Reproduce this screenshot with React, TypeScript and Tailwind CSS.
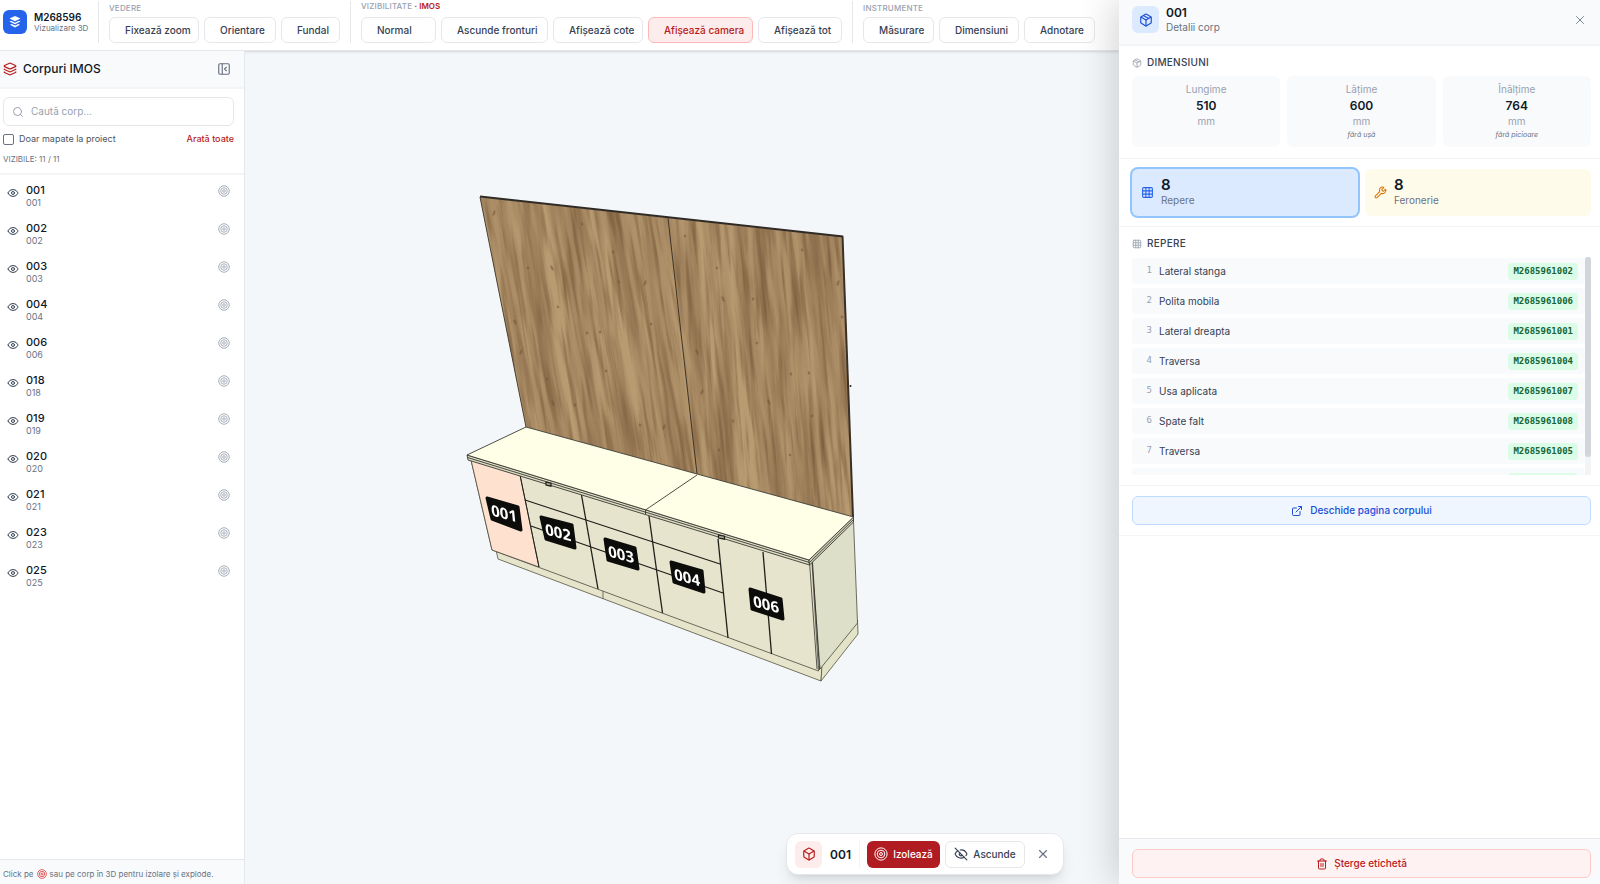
import { useState } from "react";
import {
  Box,
  ExternalLink,
  Eye,
  EyeOff,
  Grid3x3,
  Layers,
  Package,
  PanelLeftClose,
  Search,
  Trash2,
  Wrench,
  X,
} from "lucide-react";

const bodies = [
  "001",
  "002",
  "003",
  "004",
  "006",
  "018",
  "019",
  "020",
  "021",
  "023",
  "025",
];

const parts = [
  { name: "Lateral stanga", code: "M2685961002" },
  { name: "Polita mobila", code: "M2685961006" },
  { name: "Lateral dreapta", code: "M2685961001" },
  { name: "Traversa", code: "M2685961004" },
  { name: "Usa aplicata", code: "M2685961007" },
  { name: "Spate falt", code: "M2685961008" },
  { name: "Traversa", code: "M2685961005" },
  { name: "Traversa", code: "M2685961003" },
];

const dimensions = [
  { label: "Lungime", value: "510", note: "" },
  { label: "Lățime", value: "600", note: "fără ușă" },
  { label: "Înălțime", value: "764", note: "fără picioare" },
];

const viewTools = [
  { label: "Fixează zoom", width: "w-[90px]" },
  { label: "Orientare", width: "w-[72px]" },
  { label: "Fundal", width: "w-[59px]" },
];

const visibilityTools = [
  { label: "Ascunde fronturi", width: "w-[107px]" },
  { label: "Afișează cote", width: "w-[90px]" },
  { label: "Afișează camera", width: "w-[105px]", active: true },
  { label: "Afișează tot", width: "w-[84px]" },
];

const instrumentTools = [
  { label: "Măsurare", width: "w-[71px]" },
  { label: "Dimensiuni", width: "w-[80px]" },
  { label: "Adnotare", width: "w-[71px]" },
];

// front labels, placed on the plane of the doors
const tags = [
  { id: "001", points: "487,498 518,507 521,530 492,519", x: 504, y: 513 },
  { id: "002", points: "541,517 572,525 575,548 546,539", x: 558, y: 532 },
  { id: "003", points: "605,539 635,548 638,569 608,560", x: 621, y: 554 },
  { id: "004", points: "671,562 702,571 704,592 674,582", x: 687, y: 577 },
  { id: "006", points: "750,589 781,599 783,619 752,609", x: 766, y: 604 },
];

const knots = [
  [494, 213], [582, 224], [528, 268], [552, 268], [613, 252], [619, 282],
  [645, 283], [558, 307], [587, 333], [515, 322], [600, 332], [651, 324],
  [521, 352], [606, 371], [547, 379], [553, 403], [575, 405], [640, 425],
  [664, 427], [685, 236], [717, 268], [723, 299], [753, 299], [802, 250],
  [838, 283], [842, 317], [757, 343], [697, 352], [791, 374], [809, 373],
  [702, 392], [733, 421], [812, 416], [769, 402], [719, 450], [790, 455],
];

type Tool = { label: string; width: string; active?: boolean };

function TargetIcon({ className }: { className: string }) {
  return (
    <svg
      viewBox="0 0 24 24"
      fill="none"
      stroke="currentColor"
      strokeWidth="1.700"
      className={className}
      aria-hidden="true"
    >
      <circle cx="12" cy="12" r="10.500" />
      <circle cx="12" cy="12" r="6.500" />
      <circle cx="12" cy="12" r="2.500" />
    </svg>
  );
}

function ToolButton({ label, width, active }: Tool) {
  return (
    <button
      type="button"
      className={`h-[26px] shrink-0 rounded-md border pl-[15px] text-left text-[10px] font-medium whitespace-nowrap ${width} ${
        active
          ? "border-[#fcb9b9] bg-[#fdecec] text-[#b91c1c]"
          : "border-gray-200 bg-white text-gray-700"
      }`}
    >
      {label}
    </button>
  );
}

function GroupLabel({ children }: { children: React.ReactNode }) {
  return (
    <div className="text-[8px] leading-[10px] font-medium tracking-wide text-gray-400 uppercase">
      {children}
    </div>
  );
}

function Toolbar() {
  return (
    <header className="flex h-[51px] shrink-0 items-center overflow-hidden border-b border-gray-200 bg-white pb-[6px] pl-[3px] shadow-sm">
      <div className="flex w-[95px] shrink-0 items-center gap-[7px]">
        <div className="flex size-6 shrink-0 items-center justify-center rounded-md bg-[#2563eb]">
          <svg viewBox="0 0 16 16" className="size-4 fill-white">
            <path d="M8 2l5.500 2.600L8 7.200 2.500 4.600z" />
            <path d="M4 6.800l4 1.900 4-1.900 1.500.8L8 10.200 2.500 7.600z" />
            <path d="M4.500 10l3.500 1.600L11.500 10l1.500.8L8 13.400 3 10.800z" />
          </svg>
        </div>
        <div className="whitespace-nowrap">
          <div className="text-[10px] leading-[12px] font-semibold text-gray-900">
            M268596
          </div>
          <div className="text-[8px] leading-[11px] text-gray-500">
            Vizualizare 3D
          </div>
        </div>
      </div>

      <div className="flex h-[42px] shrink-0 flex-col justify-end gap-1 border-l border-gray-200 pr-[10px] pl-[10px]">
        <GroupLabel>Vedere</GroupLabel>
        <div className="flex gap-[5px]">
          {viewTools.map((tool) => (
            <ToolButton key={tool.label} {...tool} />
          ))}
        </div>
      </div>

      <div className="flex h-[42px] shrink-0 flex-col justify-end gap-[6px] border-l border-gray-200 pr-[10px] pl-[10px]">
        <GroupLabel>
          Vizibilitate{" "}
          <span className="font-semibold tracking-normal text-[#b91c1c]">
            ·&nbsp;IMOS
          </span>
        </GroupLabel>
        <div className="flex gap-[5px]">
          <select
            aria-label="Mod de afișare"
            className="h-[26px] w-[75px] shrink-0 appearance-none rounded-md border border-gray-200 bg-white pl-[15px] text-[10px] font-medium text-gray-700"
          >
            <option>Normal</option>
          </select>
          {visibilityTools.map((tool) => (
            <ToolButton key={tool.label} {...tool} />
          ))}
        </div>
      </div>

      <div className="flex h-[42px] shrink-0 flex-col justify-end gap-1 border-l border-gray-200 pl-[10px]">
        <GroupLabel>Instrumente</GroupLabel>
        <div className="flex gap-[5px]">
          {instrumentTools.map((tool) => (
            <ToolButton key={tool.label} {...tool} />
          ))}
        </div>
      </div>
    </header>
  );
}

function Sidebar() {
  const [query, setQuery] = useState("");
  const visible = bodies.filter((id) => id.includes(query));

  return (
    <aside className="flex w-[245px] shrink-0 flex-col border-r border-gray-200 bg-white">
      <div className="flex h-[38px] items-center border-b-2 border-gray-100 bg-slate-50 pr-[13px] pl-[3px]">
        <Layers className="size-[14px] text-[#b91c1c]" />
        <h2 className="ml-[6px] text-[12px] font-medium text-gray-900">
          Corpuri IMOS
        </h2>
        <button
          type="button"
          aria-label="Închide panoul"
          className="ml-auto text-gray-500"
        >
          <PanelLeftClose className="size-[14px]" />
        </button>
      </div>

      <div className="border-b-2 border-gray-100 pt-2 pr-[10px] pb-2 pl-[3px]">
        <div className="flex h-[29px] items-center gap-[7px] rounded-md border border-gray-200 px-2">
          <Search className="size-3 text-gray-400" />
          <input
            type="text"
            aria-label="Caută corp"
            placeholder="Caută corp..."
            value={query}
            onChange={(e) => setQuery(e.target.value)}
            className="min-w-0 flex-1 text-[10px] outline-none placeholder:text-gray-400"
          />
        </div>
        <div className="mt-[7px] flex items-center justify-between text-[9px] leading-[12px]">
          <label className="flex items-center gap-[5px] text-gray-600">
            <input
              type="checkbox"
              className="size-[11px] appearance-none rounded-[2px] border border-gray-500 bg-white checked:bg-[#b91c1c]"
            />
            Doar mapate la proiect
          </label>
          <button type="button" className="font-medium text-[#b91c1c]">
            Arată toate
          </button>
        </div>
        <div className="mt-2 text-[8px] leading-[12px] text-gray-500">
          VIZIBILE: 11 / 11
        </div>
      </div>

      <ul className="flex-1 pt-1">
        {visible.map((id) => (
          <li key={id} className="flex h-[38px] items-start pr-[14px] pl-[7px]">
            <button
              type="button"
              aria-label={`Ascunde ${id}`}
              className="mt-2 text-gray-700"
            >
              <Eye className="size-3" />
            </button>
            <div className="ml-[7px] pt-[5px]">
              <div className="text-[11px] leading-[13px] font-medium text-gray-900">
                {id}
              </div>
              <div className="text-[9px] leading-[12px] text-gray-500">
                {id}
              </div>
            </div>
            <button
              type="button"
              aria-label={`Izolează ${id}`}
              className="mt-[6px] ml-auto text-gray-400"
            >
              <TargetIcon className="size-3" />
            </button>
          </li>
        ))}
      </ul>

      <p className="flex h-[25px] items-center gap-[3px] border-t border-gray-200 bg-slate-50 pt-[4px] pl-[3px] text-[8px] whitespace-nowrap text-gray-500">
        Click pe
        <TargetIcon className="size-[10px] text-[#dc2626]" />
        sau pe corp în 3D pentru izolare și explode.
      </p>
    </aside>
  );
}

function Scene() {
  return (
    <svg
      viewBox="245 51 874 833"
      className="block h-full w-full"
      role="img"
      aria-label="Model 3D"
    >
      <defs>
        <filter
          id="grain"
          x="0"
          y="0"
          width="100%"
          height="100%"
          colorInterpolationFilters="sRGB"
        >
          <feTurbulence
            type="fractalNoise"
            baseFrequency="0.06 0.005"
            numOctaves="4"
            seed="7"
          />
          <feColorMatrix values="0 0 0 0 0.48  0 0 0 0 0.36  0 0 0 0 0.24  1.5 0 0 0 -0.5" />
        </filter>
        <filter
          id="fibre"
          x="0"
          y="0"
          width="100%"
          height="100%"
          colorInterpolationFilters="sRGB"
        >
          <feTurbulence
            type="fractalNoise"
            baseFrequency="0.22 0.012"
            numOctaves="3"
            seed="21"
          />
          <feColorMatrix values="0 0 0 0 0.42  0 0 0 0 0.3  0 0 0 0 0.18  0 1.5 0 0 -0.68" />
        </filter>
        <clipPath id="leftBoard">
          <path d="M480 197L668 218 697 474 526 427z" />
        </clipPath>
        <clipPath id="rightBoard">
          <path d="M668 218L843 237 853 517 697 474z" />
        </clipPath>
      </defs>

      {/* Wall boards */}
      <path d="M480 197L843 237 853 517 526 427z" fill="#b99b72" />
      <g clipPath="url(#leftBoard)">
        <g transform="skewX(9)">
          <rect x="380" y="180" width="290" height="310" filter="url(#grain)" />
          <rect x="380" y="180" width="290" height="310" filter="url(#fibre)" />
        </g>
      </g>
      <g clipPath="url(#rightBoard)">
        <g transform="skewX(5)">
          <rect x="620" y="200" width="230" height="330" filter="url(#grain)" />
          <rect x="620" y="200" width="230" height="330" filter="url(#fibre)" />
        </g>
      </g>
      <g fill="#6f5032" opacity="0.5">
        {knots.map(([x, y], idx) => (
          <ellipse
            key={idx}
            cx={x}
            cy={y}
            rx={1.2}
            ry={idx % 3 === 0 ? 3 : 1.6}
            transform={`rotate(${idx % 2 ? -25 : 20} ${x} ${y})`}
          />
        ))}
      </g>
      <path d="M480 197L526 427" stroke="#4a4238" strokeWidth="1" />
      <path d="M668 218L697 474" stroke="#3f3528" strokeWidth="1" />
      <path d="M480 196.500L843 236.500" stroke="#2f2a24" strokeWidth="1.800" />
      <path d="M842.500 236L853 517" stroke="#3b3026" strokeWidth="2" />
      <circle cx="850.500" cy="386" r="1" fill="#222" />

      {/* Plinth */}
      <g stroke="#55533f" strokeWidth="0.800" strokeLinejoin="round">
        <path d="M496 550L822 668 821 681 498 559z" fill="#e6e5cc" />
        <path d="M821 681L858 634 857.500 620 822 665z" fill="#e3e3c8" />
        <path d="M603 590V599" />
      </g>

      {/* Fronts and side */}
      <g stroke="#4b4a3e" strokeWidth="0.800" strokeLinejoin="round">
        <path d="M812 562L853.500 521 857.500 623 820 669z" fill="#dedfc8" />
        <path d="M471 460L812 563 818.500 671 492 550z" fill="#e6e4cd" />
        <path d="M471 460L520 475 539 567 492 550z" fill="#fee2cf" />
      </g>
      <g fill="none" stroke="#1f1f1a" strokeWidth="1.300">
        <path d="M520 475L539 567" strokeWidth="1" />
        <path d="M581.500 495L598 589" />
        <path d="M649 516L662.500 613" />
        <path d="M718 539L728 638" />
        <path d="M763 552L771.500 654" />
        <path d="M525 500L586 520 653 542 720 564" />
        <path d="M531 526L591 547 657 570 723 593" />
        <path d="M812.500 562L819.500 670" strokeWidth="0.700" />
        <path d="M809.500 562L817 669" strokeWidth="0.700" />
      </g>

      {/* Countertop */}
      <g stroke="#3a3a33" strokeWidth="0.900" strokeLinejoin="round">
        <path d="M467 455L809 560 809.500 565 468 460z" fill="#dcdcc4" />
        <path d="M809 560L853.500 517 853.500 522 809.500 565z" fill="#d4d4bc" />
        <path d="M467 455L526 427 853.500 517 809 560z" fill="#ffffe8" />
        <path d="M467.500 457.500L809.500 562.500 853.500 519.500" fill="none" />
        <path d="M697 475L645.500 510V514" fill="none" />
      </g>
      <g fill="#a6a695" stroke="#1f1f1a" strokeWidth="1.200">
        <path d="M546 482l5 1.200v3l-5-1.200z" />
        <path d="M718.500 535l6 1.200v3l-6-1.200z" />
      </g>

      {/* Labels */}
      {tags.map((tag) => (
        <g key={tag.id}>
          <polygon
            points={tag.points}
            fill="#0c0c0a"
            stroke="#0c0c0a"
            strokeWidth="3"
            strokeLinejoin="round"
          />
          <text
            transform={`translate(${tag.x} ${tag.y}) skewY(15) skewX(6)`}
            textAnchor="middle"
            dominantBaseline="central"
            className="fill-white font-['Open_Sans',sans-serif] text-[15px] font-bold"
          >
            {tag.id}
          </text>
        </g>
      ))}
    </svg>
  );
}

function SelectionBar() {
  return (
    <div className="absolute right-[55px] bottom-[9px] flex h-[42px] items-center rounded-xl border border-gray-200 bg-white px-2 shadow-lg">
      <div className="flex size-[27px] items-center justify-center rounded-md bg-[#fdecec] text-[#b91c1c]">
        <Box className="size-[14px]" />
      </div>
      <span className="ml-2 border-r border-gray-100 pr-2 text-[12px] leading-[27px] font-semibold text-gray-900">
        001
      </span>
      <button
        type="button"
        className="ml-[7px] flex h-[27px] w-[73px] items-center justify-center gap-[5px] rounded-md bg-[#b01c22] text-[10px] font-medium text-white"
      >
        <TargetIcon className="size-[14px]" />
        Izolează
      </button>
      <button
        type="button"
        className="ml-[5px] flex h-[27px] w-[80px] items-center justify-center gap-[5px] rounded-md border border-gray-200 bg-white text-[10px] font-medium text-gray-700"
      >
        <EyeOff className="size-[14px]" />
        Ascunde
      </button>
      <button
        type="button"
        aria-label="Închide selecția"
        className="ml-[11px] pr-[5px] text-gray-500"
      >
        <X className="size-[14px]" />
      </button>
    </div>
  );
}

function DetailPanel() {
  const [tab, setTab] = useState("repere");

  return (
    <section className="z-10 flex w-[481px] shrink-0 flex-col bg-white shadow-[-8px_0_32px_rgba(0,0,0,0.15)]">
      <div className="flex h-[46px] shrink-0 items-center border-b-2 border-gray-100 bg-slate-50 pr-[13px] pb-[5px] pl-[13px]">
        <div className="flex size-[27px] items-center justify-center rounded-md bg-blue-100 text-[#1d4ed8]">
          <Package className="size-[14px]" />
        </div>
        <div className="ml-[7px]">
          <h2 className="text-[12px] leading-[15px] font-semibold text-gray-900">
            001
          </h2>
          <p className="text-[10px] leading-[14px] text-gray-500">
            Detalii corp
          </p>
        </div>
        <button
          type="button"
          aria-label="Închide"
          className="ml-auto text-gray-500"
        >
          <X className="size-[14px]" strokeWidth={1.5} />
        </button>
      </div>

      {/* Dimensions */}
      <div className="border-b border-gray-100 pt-[9px] pr-[9px] pb-[11px] pl-[13px]">
        <h3 className="flex items-center gap-[5px] text-[10px] leading-[15px] font-medium tracking-wide text-gray-700">
          <Package className="size-[10px] text-gray-400" />
          DIMENSIUNI
        </h3>
        <div className="mt-[6px] grid grid-cols-3 gap-[7px] text-center">
          {dimensions.map((d) => (
            <div
              key={d.label}
              className="h-[71px] rounded-md bg-slate-50 pt-[6px]"
            >
              <div className="text-[10px] leading-[15px] text-gray-400">
                {d.label}
              </div>
              <div className="text-[12px] leading-[17px] font-semibold text-gray-900">
                {d.value}
              </div>
              <div className="text-[10px] leading-[14px] text-gray-400">mm</div>
              <div className="text-[7px] leading-[14px] text-gray-500 italic">
                {d.note}
              </div>
            </div>
          ))}
        </div>
      </div>

      {/* Counters */}
      <div className="grid grid-cols-2 gap-[7px] border-b border-gray-100 py-[10px] pr-[9px] pl-[13px]">
        <button
          type="button"
          onClick={() => setTab("repere")}
          className={`flex h-[47px] items-center gap-[7px] rounded-md pl-[9px] text-left ${
            tab === "repere" ? "bg-blue-100 ring-2 ring-[#93c5fd]" : "bg-blue-50"
          }`}
        >
          <Grid3x3 className="size-[13px] text-[#2563eb]" />
          <span className="pb-[2px]">
            <span className="block text-[15px] leading-[17px] font-semibold text-gray-900">
              8
            </span>
            <span className="block text-[10px] leading-[15px] text-gray-500">
              Repere
            </span>
          </span>
        </button>
        <button
          type="button"
          onClick={() => setTab("feronerie")}
          className={`flex h-[47px] items-center gap-[7px] rounded-md bg-amber-50 pl-[9px] text-left ${
            tab === "feronerie" ? "ring-2 ring-amber-300" : ""
          }`}
        >
          <Wrench className="size-[13px] text-[#d97706]" />
          <span className="pb-[2px]">
            <span className="block text-[15px] leading-[17px] font-semibold text-gray-900">
              8
            </span>
            <span className="block text-[10px] leading-[15px] text-gray-500">
              Feronerie
            </span>
          </span>
        </button>
      </div>

      {/* Parts */}
      <div className="border-b border-gray-100 pt-[9px] pr-[9px] pb-[10px] pl-[13px]">
        <h3 className="flex items-center gap-[5px] text-[10px] leading-[15px] font-medium tracking-wide text-gray-700">
          <Grid3x3 className="size-[10px] text-gray-400" />
          REPERE
        </h3>
        <div className="mt-[6px] flex h-[218px]">
          <ol className="flex flex-1 flex-col gap-1 overflow-y-auto pt-px [scrollbar-width:none]">
            {parts.map((part, idx) => (
              <li
                key={part.code}
                className="flex h-[26px] shrink-0 items-center rounded-sm bg-slate-50 pr-[7px] text-[10px] text-gray-700"
              >
                <span className="w-5 text-right font-['DejaVu_Sans_Mono',monospace] text-[9px] text-gray-400">
                  {idx + 1}
                </span>
                <span className="ml-[7px]">{part.name}</span>
                <span className="ml-auto rounded-sm bg-green-100 px-[5px] font-['DejaVu_Sans_Mono',monospace] text-[9px] leading-[17px] font-bold text-[#166534]">
                  {part.code}
                </span>
              </li>
            ))}
          </ol>
          <div className="w-[6px] bg-gray-100">
            <div className="h-[200px] rounded-full bg-gray-300" />
          </div>
        </div>
      </div>

      <div className="border-b border-gray-100 py-[10px] pr-[9px] pl-[13px]">
        <a
          href="#corp-001"
          className="flex h-[29px] items-center justify-center gap-[7px] rounded-md border border-[#bfdbfe] bg-blue-50 text-[10px] font-medium text-[#1d4ed8]"
        >
          <ExternalLink className="size-3" />
          Deschide pagina corpului
        </a>
      </div>

      <div className="mt-auto border-t border-gray-200 bg-slate-50 pt-[10px] pr-[9px] pb-[6px] pl-[13px]">
        <button
          type="button"
          className="flex h-[29px] w-full items-center justify-center gap-[6px] rounded-md border border-[#fecaca] bg-[#fef2f2] text-[10px] font-medium text-[#b91c1c]"
        >
          <Trash2 className="size-3" />
          Șterge etichetă
        </button>
      </div>
    </section>
  );
}

export default function App() {
  return (
    <div className="flex h-screen overflow-hidden bg-[#f3f7fa] font-['Inter',sans-serif]">
      <div className="flex min-w-0 flex-1 flex-col">
        <Toolbar />
        <div className="flex min-h-0 flex-1">
          <Sidebar />
          <main className="relative min-w-0 flex-1">
            <Scene />
            <SelectionBar />
          </main>
        </div>
      </div>
      <DetailPanel />
    </div>
  );
}
